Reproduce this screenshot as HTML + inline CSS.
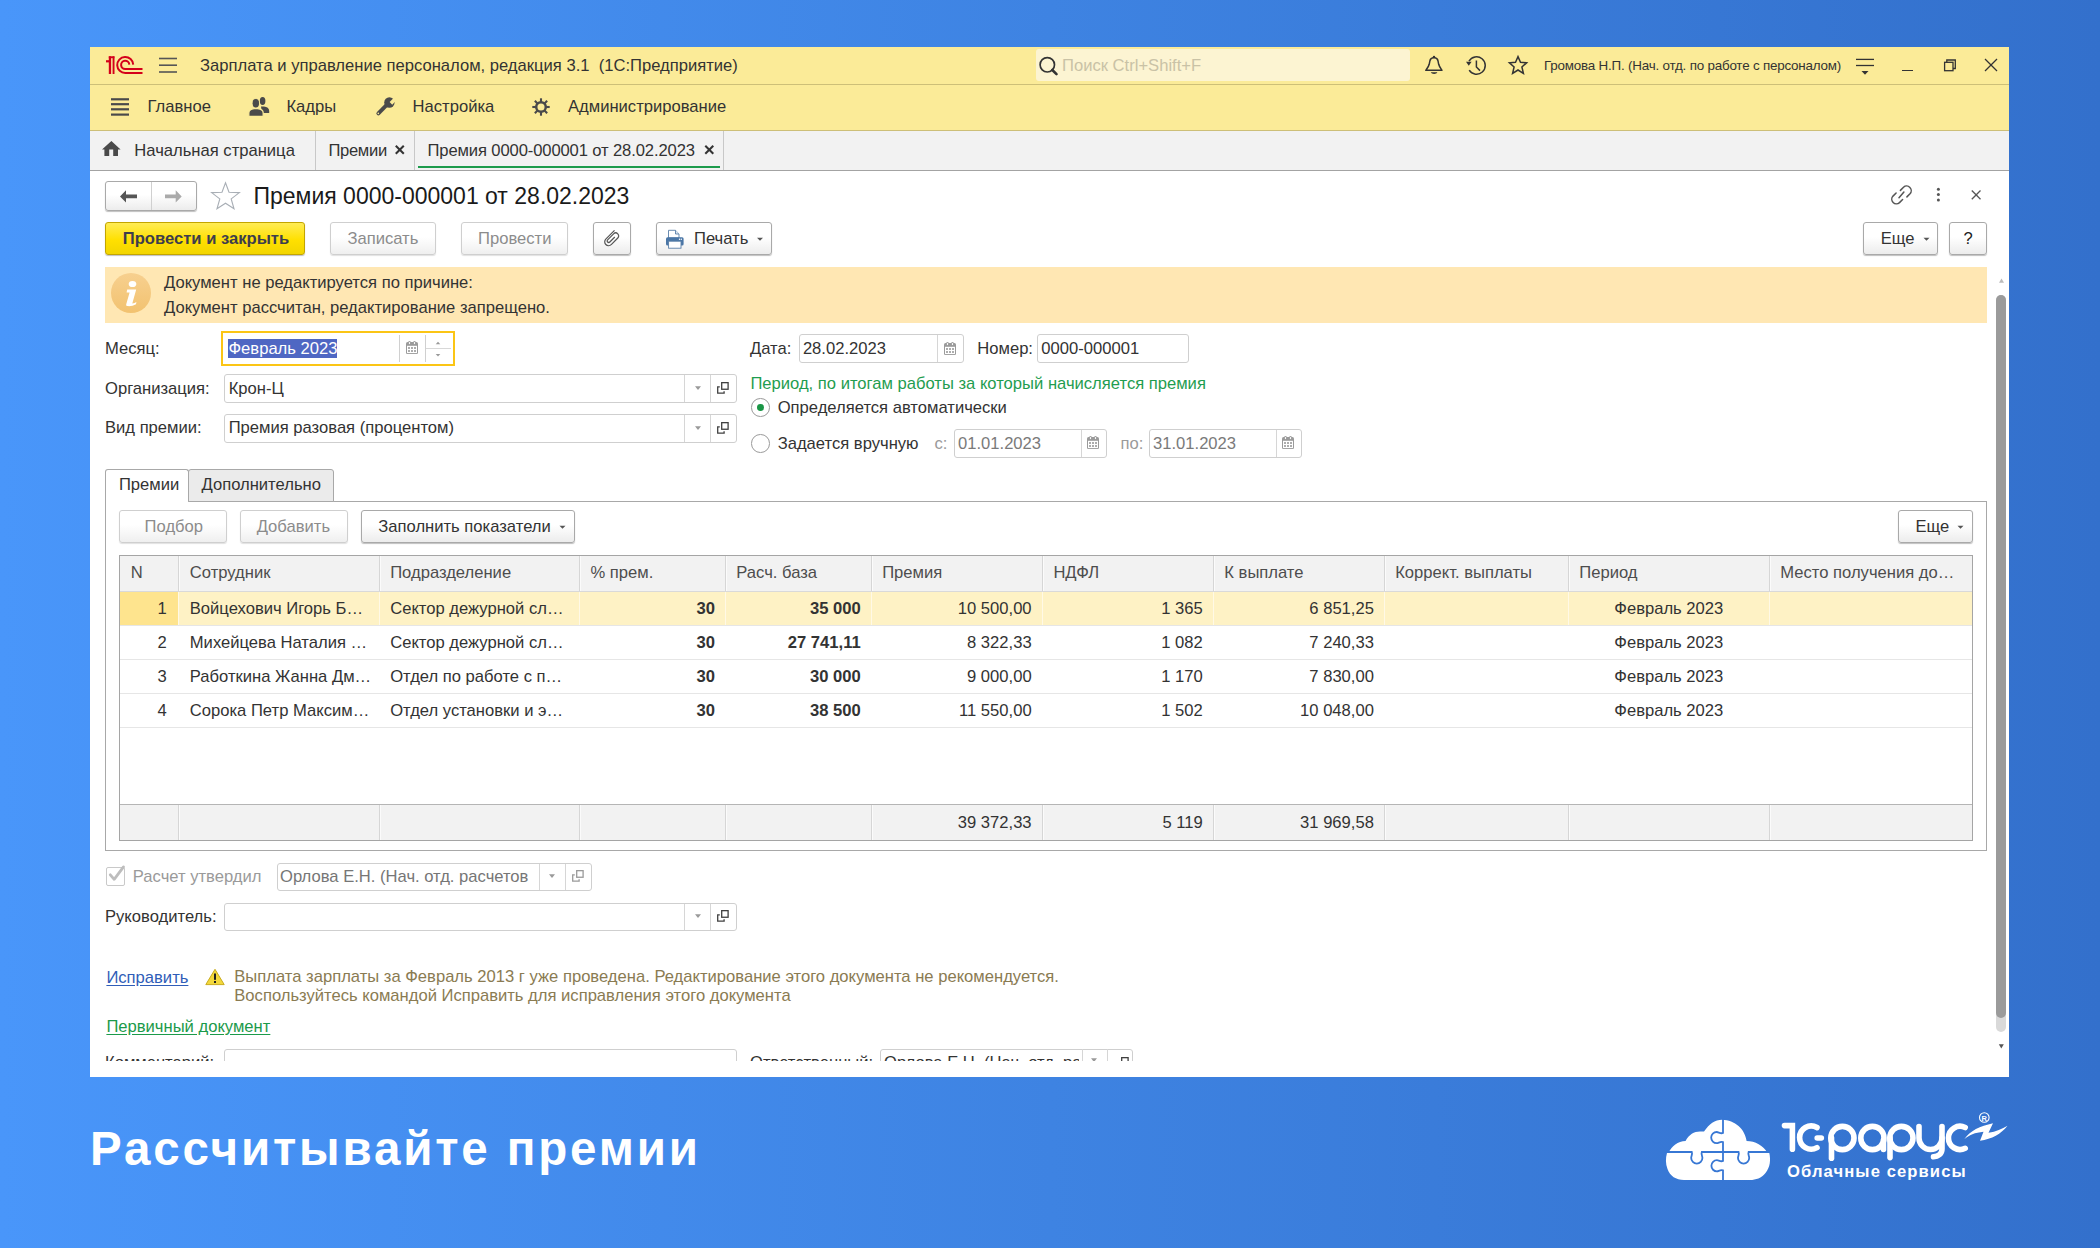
<!DOCTYPE html>
<html><head><meta charset="utf-8"><style>
html,body{margin:0;padding:0;}
body{width:2100px;height:1248px;overflow:hidden;position:relative;background:linear-gradient(90deg,#4996fa 0%,#3e83e2 50%,#3370cc 100%);font-family:"Liberation Sans",sans-serif;}
.t{position:absolute;white-space:pre;}
.b{position:absolute;box-sizing:border-box;}
.btn{position:absolute;box-sizing:border-box;border:1px solid #a9a9a9;border-radius:3px;background:linear-gradient(#ffffff 0%,#ffffff 45%,#ececec 100%);box-shadow:0 1px 1px rgba(0,0,0,0.25);}
.btnd{position:absolute;box-sizing:border-box;border:1px solid #cfcfcf;border-radius:3px;background:linear-gradient(#ffffff 0%,#ffffff 45%,#efefef 100%);box-shadow:0 1px 1px rgba(0,0,0,0.12);}
.fld{position:absolute;box-sizing:border-box;border:1px solid #cfcfcf;border-radius:3px;background:#fff;}
.clip{position:absolute;overflow:hidden;}
</style></head><body>

<div class="b" style="left:90px;top:47px;width:1919px;height:1030px;background:#fff;"></div>
<div class="b" style="left:90px;top:47px;width:1919px;height:37px;background:#fbeb98;"></div>
<div class="b" style="left:90px;top:84px;width:1919px;height:1px;background:#cdbf78;"></div>
<div class="b" style="left:90px;top:85px;width:1919px;height:45px;background:#fbeb98;"></div>
<div class="b" style="left:90px;top:130px;width:1919px;height:1px;background:#cdbf78;"></div>
<div class="b" style="left:90px;top:131px;width:1919px;height:39px;background:#f2f2f2;"></div>
<div class="b" style="left:90px;top:170px;width:1919px;height:1px;background:#a3a3a3;"></div>
<svg class="b" style="left:100px;top:50px" width="50" height="30" viewBox="100 50 50 30">
<g fill="#d4001a">
<rect x="108.8" y="56.3" width="2.3" height="17.7"/>
<rect x="106" y="60.2" width="5" height="2.2"/>
<rect x="108.8" y="56.3" width="5.6" height="1.9"/>
<rect x="112.6" y="56.3" width="1.9" height="17.7"/>
</g>
<g fill="none" stroke="#d4001a" stroke-width="2">
<path d="M133.2 64.6 A 8 8 0 1 0 125.4 73 L 142.5 73"/>
<path d="M129.3 64.6 A 4.1 4.1 0 1 0 125.4 69 L 142.5 69"/>
</g></svg>
<svg class="b" style="left:150px;top:50px" width="40" height="30" viewBox="150 50 40 30"><g stroke="#555" stroke-width="1.6"><line x1="159" y1="58.5" x2="177" y2="58.5"/><line x1="159" y1="65.2" x2="177" y2="65.2"/><line x1="159" y1="72" x2="177" y2="72"/></g></svg>
<div class="t" style="left:200px;top:56.17px;font-size:16.6px;line-height:20.75px;color:#333;font-weight:normal;">Зарплата и управление персоналом, редакция 3.1  (1С:Предприятие)</div>
<div class="b" style="left:1036px;top:49px;width:374px;height:32px;background:#fcf4d2;border-radius:3px;"></div>
<svg class="b" style="left:1030px;top:50px" width="40" height="30" viewBox="1030 50 40 30"><circle cx="1047.3" cy="64.8" r="7.2" fill="none" stroke="#333" stroke-width="1.7"/><line x1="1052.3" y1="70" x2="1056.5" y2="74.2" stroke="#333" stroke-width="2.6" stroke-linecap="round"/></svg>
<div class="t" style="left:1062px;top:55.67px;font-size:16.6px;line-height:20.75px;color:#c9c2a6;font-weight:normal;">Поиск Ctrl+Shift+F</div>
<svg class="b" style="left:1420px;top:50px" width="30" height="30" viewBox="1420 50 30 30"><g fill="none" stroke="#333" stroke-width="1.5" stroke-linejoin="round">
<path d="M1425.8 70.3 L1442 70.3 C1441 68.8 1439.3 66.8 1438.7 64.3 L1438 60.8 C1437.6 58.8 1436 57.8 1434 57.6 C1432 57.8 1430.3 58.8 1429.9 60.8 L1429.2 64.3 C1428.6 66.8 1426.8 68.8 1425.8 70.3 Z"/></g>
<circle cx="1434" cy="57" r="1.2" fill="#333"/>
<path d="M1430.8 72.3 L1437.4 72.3 C1436.5 74.6 1431.7 74.6 1430.8 72.3 Z" fill="#333"/></svg>
<svg class="b" style="left:1460px;top:50px" width="30" height="30" viewBox="1460 50 30 30"><g fill="none" stroke="#333" stroke-width="1.5">
<path d="M1469 61.2 A 8.7 8.7 0 1 1 1469.2 70.2"/>
<path d="M1476.4 60.5 L1476.4 67 L1480 70.6"/></g>
<path d="M1466 61.8 L1471.6 61.8 L1468.8 65.8 Z" fill="#333"/></svg>
<svg class="b" style="left:1500px;top:50px" width="35" height="30" viewBox="1500 50 35 30"><path d="M1518 56.6 L1520.5 62.3 L1526.6 62.8 L1521.9 67 L1523.4 73.4 L1518 70 L1512.6 73.4 L1514.1 67 L1509.4 62.8 L1515.5 62.3 Z" fill="none" stroke="#333" stroke-width="1.5" stroke-linejoin="miter"/></svg>
<div class="t" style="left:1544px;top:57.78px;font-size:13.4px;line-height:16.75px;color:#333;font-weight:normal;letter-spacing:-0.2px;">Громова Н.П. (Нач. отд. по работе с персоналом)</div>
<svg class="b" style="left:1850px;top:50px" width="30" height="30" viewBox="1850 50 30 30"><g stroke="#333" stroke-width="1.3"><line x1="1856" y1="59.4" x2="1874" y2="59.4"/><line x1="1856" y1="65.5" x2="1874" y2="65.5"/></g><path d="M1861.5 71 L1868.5 71 L1865 74.8 Z" fill="#333"/></svg>
<div class="b" style="left:1902px;top:70px;width:11px;height:1.4px;background:#333;"></div>
<svg class="b" style="left:1940px;top:55px" width="20" height="20" viewBox="1940 55 20 20"><g fill="none" stroke="#333" stroke-width="1.3"><rect x="1944.6" y="62.3" width="8.4" height="8.4"/><path d="M1946.8 62.3 L1946.8 60 L1955.3 60 L1955.3 68.5 L1953 68.5"/></g></svg>
<svg class="b" style="left:1980px;top:55px" width="22" height="20" viewBox="1980 55 22 20"><g stroke="#333" stroke-width="1.3"><line x1="1985" y1="59" x2="1997" y2="71"/><line x1="1997" y1="59" x2="1985" y2="71"/></g></svg>
<svg class="b" style="left:105px;top:92px" width="30" height="30" viewBox="105 92 30 30"><g stroke="#4a4a4a" stroke-width="2.2"><line x1="111" y1="99.3" x2="129" y2="99.3"/><line x1="111" y1="104.2" x2="129" y2="104.2"/><line x1="111" y1="109.3" x2="129" y2="109.3"/><line x1="111" y1="114.6" x2="129" y2="114.6"/></g></svg>
<div class="t" style="left:147.5px;top:96.87px;font-size:16.6px;line-height:20.75px;color:#333;font-weight:normal;">Главное</div>
<svg class="b" style="left:245px;top:92px" width="30" height="30" viewBox="245 92 30 30"><g fill="#4a4a4a">
<ellipse cx="262.6" cy="101" rx="2.8" ry="4"/>
<path d="M261 106.6 L264 106.6 C267 106.8 269.2 108.5 269.2 111 L269.2 113 L262 113 Z"/>
</g>
<g fill="#4a4a4a" stroke="#fbeb98" stroke-width="1.3">
<ellipse cx="255.8" cy="103.3" rx="3.5" ry="4.5"/>
<path d="M248.8 116.3 L248.8 113 C248.8 110.5 251.2 108.9 254 108.6 L257.6 108.6 C260.6 108.9 263.2 110.5 263.2 113 L263.2 116.3 Z"/>
</g>
<ellipse cx="255.8" cy="103.3" rx="3.2" ry="4.2" fill="#4a4a4a"/></svg>
<div class="t" style="left:286.4px;top:96.87px;font-size:16.6px;line-height:20.75px;color:#333;font-weight:normal;">Кадры</div>
<svg class="b" style="left:370px;top:92px" width="30" height="30" viewBox="370 92 30 30"><g fill="#4a4a4a"><line x1="378.4" y1="113.3" x2="387" y2="104.7" stroke="#4a4a4a" stroke-width="4" stroke-linecap="round"/>
<circle cx="389.4" cy="102.5" r="5.2"/></g>
<path d="M389.6 102.1 L394.6 96.9 L397.3 99.6 L392.2 104.7 Z" fill="#fbeb98"/>
<circle cx="378.3" cy="113.4" r="0.8" fill="#fbeb98"/></svg>
<div class="t" style="left:412.6px;top:96.87px;font-size:16.6px;line-height:20.75px;color:#333;font-weight:normal;">Настройка</div>
<svg class="b" style="left:525px;top:92px" width="30" height="30" viewBox="525 92 30 30"><circle cx="541" cy="107" r="4.8" fill="none" stroke="#4a4a4a" stroke-width="2.5"/><g stroke="#4a4a4a" stroke-width="2.1"><line x1="546.00" y1="107.00" x2="549.70" y2="107.00"/><line x1="544.54" y1="110.54" x2="547.15" y2="113.15"/><line x1="541.00" y1="112.00" x2="541.00" y2="115.70"/><line x1="537.46" y1="110.54" x2="534.85" y2="113.15"/><line x1="536.00" y1="107.00" x2="532.30" y2="107.00"/><line x1="537.46" y1="103.46" x2="534.85" y2="100.85"/><line x1="541.00" y1="102.00" x2="541.00" y2="98.30"/><line x1="544.54" y1="103.46" x2="547.15" y2="100.85"/></g></svg>
<div class="t" style="left:568px;top:96.87px;font-size:16.6px;line-height:20.75px;color:#333;font-weight:normal;">Администрирование</div>
<svg class="b" style="left:98px;top:135px" width="28" height="28" viewBox="98 135 28 28"><path d="M111.4 141 L102 149.6 L104.4 149.6 L104.4 156 L109.2 156 L109.2 149.6 L113.2 149.6 L113.2 156 L118 156 L118 149.6 L120.6 149.6 Z" fill="#4a4a4a"/></svg>
<div class="t" style="left:134.3px;top:140.57px;font-size:16.6px;line-height:20.75px;color:#333;font-weight:normal;">Начальная страница</div>
<div class="b" style="left:315px;top:131px;width:1px;height:39px;background:#c8c8c8;"></div>
<div class="t" style="left:328.4px;top:140.57px;font-size:16.6px;line-height:20.75px;color:#333;font-weight:normal;letter-spacing:-0.3px;">Премии</div>
<svg class="b" style="left:390px;top:140px" width="20" height="20" viewBox="390 140 20 20"><g stroke="#333" stroke-width="2"><line x1="395.8" y1="145.8" x2="403.8" y2="153.8"/><line x1="403.8" y1="145.8" x2="395.8" y2="153.8"/></g></svg>
<div class="b" style="left:414px;top:131px;width:1px;height:39px;background:#c8c8c8;"></div>
<div class="t" style="left:427.5px;top:140.57px;font-size:16.6px;line-height:20.75px;color:#333;font-weight:normal;letter-spacing:-0.12px;">Премия 0000-000001 от 28.02.2023</div>
<svg class="b" style="left:700px;top:140px" width="20" height="20" viewBox="700 140 20 20"><g stroke="#333" stroke-width="2"><line x1="705.3" y1="145.8" x2="713.3" y2="153.8"/><line x1="713.3" y1="145.8" x2="705.3" y2="153.8"/></g></svg>
<div class="b" style="left:418px;top:166px;width:302px;height:2px;background:#1d9b4c;"></div>
<div class="b" style="left:723px;top:131px;width:1px;height:39px;background:#c8c8c8;"></div>
<div class="btn" style="left:105px;top:181px;width:92px;height:30px;"></div>
<div class="b" style="left:151px;top:182px;width:1px;height:28px;background:#d0d0d0;"></div>
<svg class="b" style="left:115px;top:185px" width="70" height="24" viewBox="115 185 70 24"><path d="M120 196.4 L126 190.3 L126 194.6 L137 194.6 L137 198.2 L126 198.2 L126 202.5 Z" fill="#555"/><path d="M181.7 196.4 L175.7 190.3 L175.7 194.6 L165 194.6 L165 198.2 L175.7 198.2 L175.7 202.5 Z" fill="#aaa"/></svg>
<svg class="b" style="left:208px;top:180px" width="36" height="32" viewBox="208 180 36 32"><path d="M225.5 182.8 L229 192.2 L239.4 192.6 L231.2 198.9 L234 208.8 L225.5 203.2 L217 208.8 L219.8 198.9 L211.6 192.6 L222 192.2 Z" fill="none" stroke="#a8aeb5" stroke-width="1.1" stroke-linejoin="miter"/></svg>
<div class="t" style="left:253.5px;top:182.46px;font-size:23px;line-height:28.75px;color:#1a1a1a;font-weight:normal;">Премия 0000-000001 от 28.02.2023</div>
<svg class="b" style="left:1885px;top:180px" width="32" height="30" viewBox="1885 180 32 30"><g fill="none" stroke="#555" stroke-width="1.5" stroke-linecap="round">
<path d="M1900.4 190.4 L1903.5 187.3 A4.6 4.6 0 0 1 1910 193.8 L1906.9 196.9"/>
<path d="M1902.6 199.5 L1899.5 202.6 A4.6 4.6 0 0 1 1893 196.1 L1896.1 193"/>
<line x1="1899" y1="197.8" x2="1903.9" y2="192"/>
</g></svg>
<svg class="b" style="left:1930px;top:180px" width="18" height="30" viewBox="1930 180 18 30"><g fill="#555"><circle cx="1938.4" cy="189.2" r="1.5"/><circle cx="1938.4" cy="194.6" r="1.5"/><circle cx="1938.4" cy="199.9" r="1.5"/></g></svg>
<svg class="b" style="left:1965px;top:185px" width="22" height="20" viewBox="1965 185 22 20"><g stroke="#555" stroke-width="1.3"><line x1="1971.8" y1="190.5" x2="1980.5" y2="199.2"/><line x1="1980.5" y1="190.5" x2="1971.8" y2="199.2"/></g></svg>
<div class="b" style="left:105px;top:222px;width:200px;height:33px;border:1px solid #c3a500;border-radius:3px;background:linear-gradient(#ffec55 0%,#ffe000 55%,#f2d500 100%);box-shadow:0 1px 1px rgba(0,0,0,0.25);"></div>
<div class="t" style="left:122.8px;top:228.87px;font-size:16.6px;line-height:20.75px;color:#3d3d4d;font-weight:bold;">Провести и закрыть</div>
<div class="btnd" style="left:330px;top:222px;width:106px;height:33px;"></div>
<div class="t" style="left:347.4px;top:228.87px;font-size:16.6px;line-height:20.75px;color:#8c8c8c;font-weight:normal;">Записать</div>
<div class="btnd" style="left:461px;top:222px;width:107px;height:33px;"></div>
<div class="t" style="left:478px;top:228.87px;font-size:16.6px;line-height:20.75px;color:#8c8c8c;font-weight:normal;">Провести</div>
<div class="btn" style="left:593px;top:222px;width:38px;height:33px;"></div>
<svg class="b" style="left:600px;top:226px" width="24" height="24" viewBox="600 226 24 24"><path d="M614.5 230.3 L606 238.8 C604.3 240.5 604.3 243 605.8 244.5 C607.3 246 609.8 246 611.5 244.3 L617.8 238 C619 236.8 619 235 617.8 233.8 C616.6 232.6 614.8 232.6 613.6 233.8 L607.6 239.8 C607 240.4 607 241.4 607.6 242 C608.2 242.6 609.2 242.6 609.8 242 L614.8 237" fill="none" stroke="#555" stroke-width="1.2"/></svg>
<div class="btn" style="left:656px;top:222px;width:116px;height:33px;"></div>
<svg class="b" style="left:662px;top:226px" width="26" height="26" viewBox="662 226 26 26"><path d="M668.5 230.3 L675.5 230.3 L679 234 L679 238 L668.5 238 Z" fill="#fff" stroke="#5a7fa8" stroke-width="0.9"/>
<path d="M675.5 230.3 L675.5 234 L679 234" fill="#dce6f0" stroke="#5a7fa8" stroke-width="0.9"/>
<rect x="666" y="237.2" width="17.6" height="8.2" rx="1.5" fill="#4a76a6"/>
<rect x="668.6" y="241.2" width="12.4" height="7" fill="#fff" stroke="#5a7fa8" stroke-width="0.9"/>
<circle cx="679.5" cy="239.3" r="0.7" fill="#fff"/><circle cx="681.3" cy="239.3" r="0.7" fill="#fff"/></svg>
<div class="t" style="left:694px;top:228.87px;font-size:16.6px;line-height:20.75px;color:#333;font-weight:normal;">Печать</div>
<svg class="b" style="left:754px;top:234px" width="12" height="10" viewBox="754 234 12 10"><path d="M757 237.8 L763 237.8 L760 240.8 Z" fill="#555"/></svg>
<div class="btn" style="left:1863px;top:222px;width:75px;height:33px;"></div>
<div class="t" style="left:1880.8px;top:228.67px;font-size:16.6px;line-height:20.75px;color:#333;font-weight:normal;">Еще</div>
<svg class="b" style="left:1921px;top:234px" width="12" height="10" viewBox="1921 234 12 10"><path d="M1923.5 237.8 L1929.5 237.8 L1926.5 240.8 Z" fill="#555"/></svg>
<div class="btn" style="left:1949px;top:222px;width:38px;height:33px;"></div>
<div class="t" style="left:1963.5px;top:228.67px;font-size:16.6px;line-height:20.75px;color:#222;font-weight:normal;">?</div>
<div class="b" style="left:105px;top:267px;width:1882px;height:56px;background:#ffe7b3;"></div>
<div class="b" style="left:111px;top:273px;width:40px;height:40px;border-radius:50%;background:linear-gradient(#f7d08f,#f2c270);"></div>
<svg class="b" style="left:111px;top:273px" width="40" height="40" viewBox="0 0 40 40"><ellipse cx="21.5" cy="11" rx="3.8" ry="3.1" fill="#fff"/><path d="M16.2 16.5 L25.2 16.5 L21.3 30.4 C22.8 30.4 24.2 29.9 25.4 29.1 L25 31.3 C22.4 32.8 19.6 33.3 16.6 33.1 C15.4 33 14.9 32.3 15.3 31 L18.6 19.6 L15.6 19.4 Z" fill="#fff"/></svg>
<div class="t" style="left:164px;top:273.07px;font-size:16.6px;line-height:20.75px;color:#333;font-weight:normal;">Документ не редактируется по причине:</div>
<div class="t" style="left:164px;top:297.87px;font-size:16.6px;line-height:20.75px;color:#333;font-weight:normal;">Документ рассчитан, редактирование запрещено.</div>
<svg class="b" style="left:1995px;top:275px" width="12" height="12" viewBox="1995 275 12 12"><path d="M1999 282.8 L2004 282.8 L2001.5 278.6 Z" fill="#bbb"/></svg>
<div class="b" style="left:1996px;top:295px;width:10px;height:737px;background:#d9d9d9;border-radius:5px;"></div>
<div class="b" style="left:1996px;top:295px;width:10px;height:723px;background:#9b9b9b;border-radius:5px;"></div>
<svg class="b" style="left:1995px;top:1040px" width="12" height="12" viewBox="1995 1040 12 12"><path d="M1998.8 1044.3 L2003.8 1044.3 L2001.3 1048.6 Z" fill="#555"/></svg>
<div class="t" style="left:105px;top:339.17px;font-size:16.6px;line-height:20.75px;color:#333;font-weight:normal;">Месяц:</div>
<div class="b" style="left:221px;top:331px;width:234px;height:35px;border:2.6px solid #fbc515;background:#fff;"></div>
<div class="b" style="left:228px;top:339px;width:109px;height:19px;background:#4f67c3;"></div>
<div class="t" style="left:228.5px;top:339.07px;font-size:16.6px;line-height:20.75px;color:#fff;font-weight:normal;">Февраль 2023</div>
<div class="b" style="left:399px;top:335px;width:1px;height:27px;background:#d0d0d0;"></div>
<div class="b" style="left:425px;top:335px;width:1px;height:27px;background:#d0d0d0;"></div>
<svg class="b" style="left:406px;top:341px" width="12" height="13" viewBox="0 0 12 13"><rect x="0" y="1" width="12" height="12.2" rx="1.6" fill="#9a9a9a"/>
<rect x="1" y="4.8" width="10" height="7.3" fill="#fff"/>
<g fill="#9a9a9a"><rect x="2.1" y="6.1" width="1.8" height="1.8"/><rect x="5.1" y="6.1" width="1.8" height="1.8"/><rect x="8.1" y="6.1" width="1.8" height="1.8"/>
<rect x="2.1" y="9.1" width="1.8" height="1.8"/><rect x="5.1" y="9.1" width="1.8" height="1.8"/><rect x="8.1" y="9.1" width="1.8" height="1.8"/></g>
<circle cx="3.5" cy="1.5" r="1.5" fill="#9a9a9a"/><circle cx="8.5" cy="1.5" r="1.5" fill="#9a9a9a"/>
<ellipse cx="3.5" cy="2.1" rx="0.7" ry="1.1" fill="#fff"/><ellipse cx="8.5" cy="2.1" rx="0.7" ry="1.1" fill="#fff"/></svg>
<div class="b" style="left:426px;top:348px;width:25px;height:1px;background:#d8d8d8;"></div>
<svg class="b" style="left:433px;top:339px" width="10" height="20" viewBox="0 0 10 20"><path d="M2.7 5.2 L7.3 5.2 L5 2.7 Z" fill="#999"/><path d="M2.7 15 L7.3 15 L5 17.5 Z" fill="#999"/></svg>
<div class="t" style="left:105px;top:378.67px;font-size:16.6px;line-height:20.75px;color:#333;font-weight:normal;">Организация:</div>
<div class="fld" style="left:224px;top:374px;width:513px;height:29px;"></div>
<div class="b" style="left:684px;top:375px;width:1px;height:27px;background:#d6d6d6;"></div>
<div class="b" style="left:710px;top:375px;width:1px;height:27px;background:#d6d6d6;"></div>
<svg class="b" style="left:693px;top:384px" width="10" height="8" viewBox="0 0 10 8"><path d="M2 2.3 L8 2.3 L5 6 Z" fill="#9a9a9a"/></svg>
<svg class="b" style="left:717px;top:382px" width="13" height="13" viewBox="0 0 13 13"><g fill="none" stroke="#404040" stroke-width="1.3"><rect x="4.7" y="0.65" width="6.4" height="6.6"/><path d="M2.8 4.8 L0.7 4.8 L0.7 11.2 L7.1 11.2 L7.1 9.2"/></g></svg>
<div class="t" style="left:228.7px;top:378.67px;font-size:16.6px;line-height:20.75px;color:#333;font-weight:normal;">Крон-Ц</div>
<div class="t" style="left:105px;top:418.37px;font-size:16.6px;line-height:20.75px;color:#333;font-weight:normal;">Вид премии:</div>
<div class="fld" style="left:224px;top:414px;width:513px;height:29px;"></div>
<div class="b" style="left:684px;top:415px;width:1px;height:27px;background:#d6d6d6;"></div>
<div class="b" style="left:710px;top:415px;width:1px;height:27px;background:#d6d6d6;"></div>
<svg class="b" style="left:693px;top:424px" width="10" height="8" viewBox="0 0 10 8"><path d="M2 2.3 L8 2.3 L5 6 Z" fill="#9a9a9a"/></svg>
<svg class="b" style="left:717px;top:422px" width="13" height="13" viewBox="0 0 13 13"><g fill="none" stroke="#404040" stroke-width="1.3"><rect x="4.7" y="0.65" width="6.4" height="6.6"/><path d="M2.8 4.8 L0.7 4.8 L0.7 11.2 L7.1 11.2 L7.1 9.2"/></g></svg>
<div class="t" style="left:228.7px;top:418.37px;font-size:16.6px;line-height:20.75px;color:#333;font-weight:normal;">Премия разовая (процентом)</div>
<div class="t" style="left:750px;top:338.67px;font-size:16.6px;line-height:20.75px;color:#333;font-weight:normal;">Дата:</div>
<div class="fld" style="left:799px;top:334px;width:165px;height:29px;"></div>
<div class="b" style="left:937px;top:335px;width:1px;height:27px;background:#d6d6d6;"></div>
<svg class="b" style="left:944px;top:342px" width="12" height="13" viewBox="0 0 12 13"><rect x="0" y="1" width="12" height="12.2" rx="1.6" fill="#9a9a9a"/>
<rect x="1" y="4.8" width="10" height="7.3" fill="#fff"/>
<g fill="#9a9a9a"><rect x="2.1" y="6.1" width="1.8" height="1.8"/><rect x="5.1" y="6.1" width="1.8" height="1.8"/><rect x="8.1" y="6.1" width="1.8" height="1.8"/>
<rect x="2.1" y="9.1" width="1.8" height="1.8"/><rect x="5.1" y="9.1" width="1.8" height="1.8"/><rect x="8.1" y="9.1" width="1.8" height="1.8"/></g>
<circle cx="3.5" cy="1.5" r="1.5" fill="#9a9a9a"/><circle cx="8.5" cy="1.5" r="1.5" fill="#9a9a9a"/>
<ellipse cx="3.5" cy="2.1" rx="0.7" ry="1.1" fill="#fff"/><ellipse cx="8.5" cy="2.1" rx="0.7" ry="1.1" fill="#fff"/></svg>
<div class="t" style="left:802.9px;top:339.07px;font-size:16.6px;line-height:20.75px;color:#333;font-weight:normal;">28.02.2023</div>
<div class="t" style="left:977.3px;top:338.87px;font-size:16.6px;line-height:20.75px;color:#333;font-weight:normal;">Номер:</div>
<div class="fld" style="left:1037px;top:334px;width:152px;height:29px;"></div>
<div class="t" style="left:1041.3px;top:339.07px;font-size:16.6px;line-height:20.75px;color:#333;font-weight:normal;">0000-000001</div>
<div class="t" style="left:750.4px;top:374.37px;font-size:16.6px;line-height:20.75px;color:#1f9d50;font-weight:normal;">Период, по итогам работы за который начисляется премия</div>
<div class="b" style="left:751px;top:398.3px;width:18.6px;height:18.6px;border:1px solid #9a9a9a;border-radius:50%;background:#fff;"></div>
<div class="b" style="left:757.1px;top:404.4px;width:6.8px;height:6.8px;border-radius:50%;background:#1a9646;"></div>
<div class="t" style="left:777.7px;top:397.77px;font-size:16.6px;line-height:20.75px;color:#333;font-weight:normal;">Определяется автоматически</div>
<div class="b" style="left:751px;top:434px;width:18.6px;height:18.6px;border:1px solid #9a9a9a;border-radius:50%;background:#fff;"></div>
<div class="t" style="left:777.7px;top:433.87px;font-size:16.6px;line-height:20.75px;color:#333;font-weight:normal;">Задается вручную</div>
<div class="t" style="left:934.5px;top:433.87px;font-size:16.6px;line-height:20.75px;color:#9a9a9a;font-weight:normal;">с:</div>
<div class="fld" style="left:954px;top:429px;width:153px;height:29px;"></div>
<div class="b" style="left:1080.5px;top:430px;width:1px;height:27px;background:#d6d6d6;"></div>
<svg class="b" style="left:1087px;top:436px" width="12" height="13" viewBox="0 0 12 13"><rect x="0" y="1" width="12" height="12.2" rx="1.6" fill="#9a9a9a"/>
<rect x="1" y="4.8" width="10" height="7.3" fill="#fff"/>
<g fill="#9a9a9a"><rect x="2.1" y="6.1" width="1.8" height="1.8"/><rect x="5.1" y="6.1" width="1.8" height="1.8"/><rect x="8.1" y="6.1" width="1.8" height="1.8"/>
<rect x="2.1" y="9.1" width="1.8" height="1.8"/><rect x="5.1" y="9.1" width="1.8" height="1.8"/><rect x="8.1" y="9.1" width="1.8" height="1.8"/></g>
<circle cx="3.5" cy="1.5" r="1.5" fill="#9a9a9a"/><circle cx="8.5" cy="1.5" r="1.5" fill="#9a9a9a"/>
<ellipse cx="3.5" cy="2.1" rx="0.7" ry="1.1" fill="#fff"/><ellipse cx="8.5" cy="2.1" rx="0.7" ry="1.1" fill="#fff"/></svg>
<div class="t" style="left:958px;top:433.67px;font-size:16.6px;line-height:20.75px;color:#7a7a7a;font-weight:normal;">01.01.2023</div>
<div class="t" style="left:1120.6px;top:433.87px;font-size:16.6px;line-height:20.75px;color:#9a9a9a;font-weight:normal;">по:</div>
<div class="fld" style="left:1149px;top:429px;width:153px;height:29px;"></div>
<div class="b" style="left:1275.5px;top:430px;width:1px;height:27px;background:#d6d6d6;"></div>
<svg class="b" style="left:1282px;top:436px" width="12" height="13" viewBox="0 0 12 13"><rect x="0" y="1" width="12" height="12.2" rx="1.6" fill="#9a9a9a"/>
<rect x="1" y="4.8" width="10" height="7.3" fill="#fff"/>
<g fill="#9a9a9a"><rect x="2.1" y="6.1" width="1.8" height="1.8"/><rect x="5.1" y="6.1" width="1.8" height="1.8"/><rect x="8.1" y="6.1" width="1.8" height="1.8"/>
<rect x="2.1" y="9.1" width="1.8" height="1.8"/><rect x="5.1" y="9.1" width="1.8" height="1.8"/><rect x="8.1" y="9.1" width="1.8" height="1.8"/></g>
<circle cx="3.5" cy="1.5" r="1.5" fill="#9a9a9a"/><circle cx="8.5" cy="1.5" r="1.5" fill="#9a9a9a"/>
<ellipse cx="3.5" cy="2.1" rx="0.7" ry="1.1" fill="#fff"/><ellipse cx="8.5" cy="2.1" rx="0.7" ry="1.1" fill="#fff"/></svg>
<div class="t" style="left:1153px;top:433.67px;font-size:16.6px;line-height:20.75px;color:#7a7a7a;font-weight:normal;">31.01.2023</div>
<div class="b" style="left:105px;top:501px;width:1882px;height:350px;border:1px solid #a8a8a8;border-top:none;"></div>
<div class="b" style="left:188px;top:501px;width:1799px;height:1px;background:#a8a8a8;"></div>
<div class="b" style="left:105px;top:469px;width:84px;height:33px;border:1px solid #a8a8a8;border-bottom:none;border-radius:3px 3px 0 0;background:#fff;"></div>
<div class="b" style="left:188px;top:469px;width:146px;height:33px;border:1px solid #a8a8a8;border-radius:3px 3px 0 0;background:#ebebeb;"></div>
<div class="t" style="left:118.9px;top:475.17px;font-size:16.6px;line-height:20.75px;color:#333;font-weight:normal;">Премии</div>
<div class="t" style="left:201.5px;top:475.17px;font-size:16.6px;line-height:20.75px;color:#333;font-weight:normal;">Дополнительно</div>
<div class="btnd" style="left:119px;top:510px;width:108px;height:33px;"></div>
<div class="t" style="left:144.6px;top:516.87px;font-size:16.6px;line-height:20.75px;color:#8c8c8c;font-weight:normal;">Подбор</div>
<div class="btnd" style="left:240px;top:510px;width:108px;height:33px;"></div>
<div class="t" style="left:256.7px;top:516.87px;font-size:16.6px;line-height:20.75px;color:#8c8c8c;font-weight:normal;">Добавить</div>
<div class="btn" style="left:361px;top:510px;width:214px;height:33px;"></div>
<div class="t" style="left:378.3px;top:516.87px;font-size:16.6px;line-height:20.75px;color:#333;font-weight:normal;">Заполнить показатели</div>
<svg class="b" style="left:557px;top:522px" width="12" height="10" viewBox="557 522 12 10"><path d="M559.5 525.8 L565.5 525.8 L562.5 528.8 Z" fill="#555"/></svg>
<div class="btn" style="left:1898px;top:510px;width:75px;height:33px;"></div>
<div class="t" style="left:1915.5px;top:516.87px;font-size:16.6px;line-height:20.75px;color:#333;font-weight:normal;">Еще</div>
<svg class="b" style="left:1955px;top:522px" width="12" height="10" viewBox="1955 522 12 10"><path d="M1957.5 525.8 L1963.5 525.8 L1960.5 528.8 Z" fill="#555"/></svg>
<div class="b" style="left:119px;top:555px;width:1854px;height:286px;border:1px solid #a5a5a5;background:#fff;"></div>
<div class="b" style="left:120px;top:556px;width:1852px;height:35px;background:#f2f2f2;"></div>
<div class="b" style="left:120px;top:591px;width:1852px;height:1px;background:#d9d9d9;"></div>
<div class="b" style="left:178px;top:556px;width:1px;height:35px;background:#d6d6d6;"></div>
<div class="b" style="left:179px;top:556px;width:1px;height:35px;background:#fbfbfb;"></div>
<div class="b" style="left:379px;top:556px;width:1px;height:35px;background:#d6d6d6;"></div>
<div class="b" style="left:380px;top:556px;width:1px;height:35px;background:#fbfbfb;"></div>
<div class="b" style="left:579px;top:556px;width:1px;height:35px;background:#d6d6d6;"></div>
<div class="b" style="left:580px;top:556px;width:1px;height:35px;background:#fbfbfb;"></div>
<div class="b" style="left:725px;top:556px;width:1px;height:35px;background:#d6d6d6;"></div>
<div class="b" style="left:726px;top:556px;width:1px;height:35px;background:#fbfbfb;"></div>
<div class="b" style="left:871px;top:556px;width:1px;height:35px;background:#d6d6d6;"></div>
<div class="b" style="left:872px;top:556px;width:1px;height:35px;background:#fbfbfb;"></div>
<div class="b" style="left:1042px;top:556px;width:1px;height:35px;background:#d6d6d6;"></div>
<div class="b" style="left:1043px;top:556px;width:1px;height:35px;background:#fbfbfb;"></div>
<div class="b" style="left:1213px;top:556px;width:1px;height:35px;background:#d6d6d6;"></div>
<div class="b" style="left:1214px;top:556px;width:1px;height:35px;background:#fbfbfb;"></div>
<div class="b" style="left:1384px;top:556px;width:1px;height:35px;background:#d6d6d6;"></div>
<div class="b" style="left:1385px;top:556px;width:1px;height:35px;background:#fbfbfb;"></div>
<div class="b" style="left:1568px;top:556px;width:1px;height:35px;background:#d6d6d6;"></div>
<div class="b" style="left:1569px;top:556px;width:1px;height:35px;background:#fbfbfb;"></div>
<div class="b" style="left:1769px;top:556px;width:1px;height:35px;background:#d6d6d6;"></div>
<div class="b" style="left:1770px;top:556px;width:1px;height:35px;background:#fbfbfb;"></div>
<div class="t" style="left:130.7px;top:562.87px;font-size:16.6px;line-height:20.75px;color:#4d4d4d;font-weight:normal;">N</div>
<div class="t" style="left:189.8px;top:562.87px;font-size:16.6px;line-height:20.75px;color:#4d4d4d;font-weight:normal;">Сотрудник</div>
<div class="t" style="left:390.2px;top:562.87px;font-size:16.6px;line-height:20.75px;color:#4d4d4d;font-weight:normal;">Подразделение</div>
<div class="t" style="left:590.5px;top:562.87px;font-size:16.6px;line-height:20.75px;color:#4d4d4d;font-weight:normal;">% прем.</div>
<div class="t" style="left:736.3px;top:562.87px;font-size:16.6px;line-height:20.75px;color:#4d4d4d;font-weight:normal;">Расч. база</div>
<div class="t" style="left:882.2px;top:562.87px;font-size:16.6px;line-height:20.75px;color:#4d4d4d;font-weight:normal;">Премия</div>
<div class="t" style="left:1053.4px;top:562.87px;font-size:16.6px;line-height:20.75px;color:#4d4d4d;font-weight:normal;">НДФЛ</div>
<div class="t" style="left:1224.3px;top:562.87px;font-size:16.6px;line-height:20.75px;color:#4d4d4d;font-weight:normal;">К выплате</div>
<div class="t" style="left:1395.2px;top:562.87px;font-size:16.6px;line-height:20.75px;color:#4d4d4d;font-weight:normal;">Коррект. выплаты</div>
<div class="t" style="left:1579.3px;top:562.87px;font-size:16.6px;line-height:20.75px;color:#4d4d4d;font-weight:normal;">Период</div>
<div class="t" style="left:1780.3px;top:562.87px;font-size:16.6px;line-height:20.75px;color:#4d4d4d;font-weight:normal;">Место получения до…</div>
<div class="b" style="left:120px;top:592px;width:1852px;height:33px;background:#fef2c5;"></div>
<div class="b" style="left:120px;top:592px;width:58px;height:33px;background:#fee48e;"></div>
<div class="b" style="left:178px;top:592px;width:1px;height:33px;background:#fff9e6;"></div>
<div class="b" style="left:379px;top:592px;width:1px;height:33px;background:#fff9e6;"></div>
<div class="b" style="left:579px;top:592px;width:1px;height:33px;background:#fff9e6;"></div>
<div class="b" style="left:725px;top:592px;width:1px;height:33px;background:#fff9e6;"></div>
<div class="b" style="left:871px;top:592px;width:1px;height:33px;background:#fff9e6;"></div>
<div class="b" style="left:1042px;top:592px;width:1px;height:33px;background:#fff9e6;"></div>
<div class="b" style="left:1213px;top:592px;width:1px;height:33px;background:#fff9e6;"></div>
<div class="b" style="left:1384px;top:592px;width:1px;height:33px;background:#fff9e6;"></div>
<div class="b" style="left:1568px;top:592px;width:1px;height:33px;background:#fff9e6;"></div>
<div class="b" style="left:1769px;top:592px;width:1px;height:33px;background:#fff9e6;"></div>
<div class="b" style="left:120px;top:625px;width:1852px;height:1px;background:#e6e6e6;"></div>
<div class="t" style="right:1933.4px;top:598.67px;font-size:16.6px;line-height:20.75px;color:#333;font-weight:normal;">1</div>
<div class="t" style="left:189.8px;top:598.67px;font-size:16.6px;line-height:20.75px;color:#333;font-weight:normal;">Войцехович Игорь Б…</div>
<div class="t" style="left:390.2px;top:598.67px;font-size:16.6px;line-height:20.75px;color:#333;font-weight:normal;">Сектор дежурной сл…</div>
<div class="t" style="right:1385px;top:598.67px;font-size:16.6px;line-height:20.75px;color:#333;font-weight:bold;">30</div>
<div class="t" style="right:1239.3px;top:598.67px;font-size:16.6px;line-height:20.75px;color:#333;font-weight:bold;">35 000</div>
<div class="t" style="right:1068.4px;top:598.67px;font-size:16.6px;line-height:20.75px;color:#333;font-weight:normal;">10 500,00</div>
<div class="t" style="right:897.3px;top:598.67px;font-size:16.6px;line-height:20.75px;color:#333;font-weight:normal;">1 365</div>
<div class="t" style="right:726.0999999999999px;top:598.67px;font-size:16.6px;line-height:20.75px;color:#333;font-weight:normal;">6 851,25</div>
<div class="t" style="left:1168.8px;width:1000px;text-align:center;top:598.67px;font-size:16.6px;line-height:20.75px;color:#333;font-weight:normal;">Февраль 2023</div>
<div class="b" style="left:120px;top:659px;width:1852px;height:1px;background:#e6e6e6;"></div>
<div class="t" style="right:1933.4px;top:632.67px;font-size:16.6px;line-height:20.75px;color:#333;font-weight:normal;">2</div>
<div class="t" style="left:189.8px;top:632.67px;font-size:16.6px;line-height:20.75px;color:#333;font-weight:normal;">Михейцева Наталия …</div>
<div class="t" style="left:390.2px;top:632.67px;font-size:16.6px;line-height:20.75px;color:#333;font-weight:normal;">Сектор дежурной сл…</div>
<div class="t" style="right:1385px;top:632.67px;font-size:16.6px;line-height:20.75px;color:#333;font-weight:bold;">30</div>
<div class="t" style="right:1239.3px;top:632.67px;font-size:16.6px;line-height:20.75px;color:#333;font-weight:bold;">27 741,11</div>
<div class="t" style="right:1068.4px;top:632.67px;font-size:16.6px;line-height:20.75px;color:#333;font-weight:normal;">8 322,33</div>
<div class="t" style="right:897.3px;top:632.67px;font-size:16.6px;line-height:20.75px;color:#333;font-weight:normal;">1 082</div>
<div class="t" style="right:726.0999999999999px;top:632.67px;font-size:16.6px;line-height:20.75px;color:#333;font-weight:normal;">7 240,33</div>
<div class="t" style="left:1168.8px;width:1000px;text-align:center;top:632.67px;font-size:16.6px;line-height:20.75px;color:#333;font-weight:normal;">Февраль 2023</div>
<div class="b" style="left:120px;top:693px;width:1852px;height:1px;background:#e6e6e6;"></div>
<div class="t" style="right:1933.4px;top:666.67px;font-size:16.6px;line-height:20.75px;color:#333;font-weight:normal;">3</div>
<div class="t" style="left:189.8px;top:666.67px;font-size:16.6px;line-height:20.75px;color:#333;font-weight:normal;">Работкина Жанна Дм…</div>
<div class="t" style="left:390.2px;top:666.67px;font-size:16.6px;line-height:20.75px;color:#333;font-weight:normal;">Отдел по работе с п…</div>
<div class="t" style="right:1385px;top:666.67px;font-size:16.6px;line-height:20.75px;color:#333;font-weight:bold;">30</div>
<div class="t" style="right:1239.3px;top:666.67px;font-size:16.6px;line-height:20.75px;color:#333;font-weight:bold;">30 000</div>
<div class="t" style="right:1068.4px;top:666.67px;font-size:16.6px;line-height:20.75px;color:#333;font-weight:normal;">9 000,00</div>
<div class="t" style="right:897.3px;top:666.67px;font-size:16.6px;line-height:20.75px;color:#333;font-weight:normal;">1 170</div>
<div class="t" style="right:726.0999999999999px;top:666.67px;font-size:16.6px;line-height:20.75px;color:#333;font-weight:normal;">7 830,00</div>
<div class="t" style="left:1168.8px;width:1000px;text-align:center;top:666.67px;font-size:16.6px;line-height:20.75px;color:#333;font-weight:normal;">Февраль 2023</div>
<div class="b" style="left:120px;top:727px;width:1852px;height:1px;background:#e6e6e6;"></div>
<div class="t" style="right:1933.4px;top:700.67px;font-size:16.6px;line-height:20.75px;color:#333;font-weight:normal;">4</div>
<div class="t" style="left:189.8px;top:700.67px;font-size:16.6px;line-height:20.75px;color:#333;font-weight:normal;">Сорока Петр Максим…</div>
<div class="t" style="left:390.2px;top:700.67px;font-size:16.6px;line-height:20.75px;color:#333;font-weight:normal;">Отдел установки и э…</div>
<div class="t" style="right:1385px;top:700.67px;font-size:16.6px;line-height:20.75px;color:#333;font-weight:bold;">30</div>
<div class="t" style="right:1239.3px;top:700.67px;font-size:16.6px;line-height:20.75px;color:#333;font-weight:bold;">38 500</div>
<div class="t" style="right:1068.4px;top:700.67px;font-size:16.6px;line-height:20.75px;color:#333;font-weight:normal;">11 550,00</div>
<div class="t" style="right:897.3px;top:700.67px;font-size:16.6px;line-height:20.75px;color:#333;font-weight:normal;">1 502</div>
<div class="t" style="right:726.0999999999999px;top:700.67px;font-size:16.6px;line-height:20.75px;color:#333;font-weight:normal;">10 048,00</div>
<div class="t" style="left:1168.8px;width:1000px;text-align:center;top:700.67px;font-size:16.6px;line-height:20.75px;color:#333;font-weight:normal;">Февраль 2023</div>
<div class="b" style="left:120px;top:804px;width:1852px;height:1px;background:#b5b5b5;"></div>
<div class="b" style="left:120px;top:805px;width:1852px;height:35px;background:#f2f2f2;"></div>
<div class="b" style="left:178px;top:805px;width:1px;height:35px;background:#d6d6d6;"></div>
<div class="b" style="left:179px;top:805px;width:1px;height:35px;background:#fbfbfb;"></div>
<div class="b" style="left:379px;top:805px;width:1px;height:35px;background:#d6d6d6;"></div>
<div class="b" style="left:380px;top:805px;width:1px;height:35px;background:#fbfbfb;"></div>
<div class="b" style="left:579px;top:805px;width:1px;height:35px;background:#d6d6d6;"></div>
<div class="b" style="left:580px;top:805px;width:1px;height:35px;background:#fbfbfb;"></div>
<div class="b" style="left:725px;top:805px;width:1px;height:35px;background:#d6d6d6;"></div>
<div class="b" style="left:726px;top:805px;width:1px;height:35px;background:#fbfbfb;"></div>
<div class="b" style="left:871px;top:805px;width:1px;height:35px;background:#d6d6d6;"></div>
<div class="b" style="left:872px;top:805px;width:1px;height:35px;background:#fbfbfb;"></div>
<div class="b" style="left:1042px;top:805px;width:1px;height:35px;background:#d6d6d6;"></div>
<div class="b" style="left:1043px;top:805px;width:1px;height:35px;background:#fbfbfb;"></div>
<div class="b" style="left:1213px;top:805px;width:1px;height:35px;background:#d6d6d6;"></div>
<div class="b" style="left:1214px;top:805px;width:1px;height:35px;background:#fbfbfb;"></div>
<div class="b" style="left:1384px;top:805px;width:1px;height:35px;background:#d6d6d6;"></div>
<div class="b" style="left:1385px;top:805px;width:1px;height:35px;background:#fbfbfb;"></div>
<div class="b" style="left:1568px;top:805px;width:1px;height:35px;background:#d6d6d6;"></div>
<div class="b" style="left:1569px;top:805px;width:1px;height:35px;background:#fbfbfb;"></div>
<div class="b" style="left:1769px;top:805px;width:1px;height:35px;background:#d6d6d6;"></div>
<div class="b" style="left:1770px;top:805px;width:1px;height:35px;background:#fbfbfb;"></div>
<div class="t" style="right:1068.4px;top:812.57px;font-size:16.6px;line-height:20.75px;color:#333;font-weight:normal;">39 372,33</div>
<div class="t" style="right:897.3px;top:812.57px;font-size:16.6px;line-height:20.75px;color:#333;font-weight:normal;">5 119</div>
<div class="t" style="right:726.0999999999999px;top:812.57px;font-size:16.6px;line-height:20.75px;color:#333;font-weight:normal;">31 969,58</div>
<div class="b" style="left:106px;top:866.5px;width:19px;height:19px;border:1px solid #c9c9c9;border-radius:2px;background:#fff;"></div>
<svg class="b" style="left:106px;top:864px" width="22" height="22" viewBox="0 0 22 22"><path d="M4.3 10.8 L8.2 15.3 L17.5 2.9" fill="none" stroke="#bdbdbd" stroke-width="2.8" stroke-linejoin="round" stroke-linecap="round"/></svg>
<div class="t" style="left:132.8px;top:866.57px;font-size:16.6px;line-height:20.75px;color:#9a9a9a;font-weight:normal;">Расчет утвердил</div>
<div class="fld" style="left:276.5px;top:862.5px;width:315.5px;height:28.0px;"></div>
<div class="b" style="left:539px;top:863.5px;width:1px;height:26.0px;background:#d6d6d6;"></div>
<div class="b" style="left:565px;top:863.5px;width:1px;height:26.0px;background:#d6d6d6;"></div>
<svg class="b" style="left:547px;top:872px" width="10" height="8" viewBox="0 0 10 8"><path d="M2 2.3 L8 2.3 L5 6 Z" fill="#9a9a9a"/></svg>
<svg class="b" style="left:572px;top:870px" width="13" height="13" viewBox="0 0 13 13"><g fill="none" stroke="#9a9a9a" stroke-width="1.3"><rect x="4.7" y="0.65" width="6.4" height="6.6"/><path d="M2.8 4.8 L0.7 4.8 L0.7 11.2 L7.1 11.2 L7.1 9.2"/></g></svg>
<div class="clip" style="left:278px;top:864px;width:258px;height:25px;"><div class="t" style="left:2px;top:-0.5px;font-size:16.6px;line-height:25px;color:#767676;">Орлова Е.Н. (Нач. отд. расчетов</div></div>
<div class="t" style="left:105px;top:906.67px;font-size:16.6px;line-height:20.75px;color:#333;font-weight:normal;">Руководитель:</div>
<div class="fld" style="left:224px;top:902.5px;width:513px;height:28.0px;"></div>
<div class="b" style="left:684px;top:903.5px;width:1px;height:26.0px;background:#d6d6d6;"></div>
<div class="b" style="left:710px;top:903.5px;width:1px;height:26.0px;background:#d6d6d6;"></div>
<svg class="b" style="left:693px;top:912px" width="10" height="8" viewBox="0 0 10 8"><path d="M2 2.3 L8 2.3 L5 6 Z" fill="#9a9a9a"/></svg>
<svg class="b" style="left:717px;top:910px" width="13" height="13" viewBox="0 0 13 13"><g fill="none" stroke="#404040" stroke-width="1.3"><rect x="4.7" y="0.65" width="6.4" height="6.6"/><path d="M2.8 4.8 L0.7 4.8 L0.7 11.2 L7.1 11.2 L7.1 9.2"/></g></svg>
<div class="t" style="left:106.4px;top:967.77px;font-size:16.6px;line-height:20.75px;color:#2f5db8;font-weight:normal;text-decoration:underline;text-underline-offset:2px;">Исправить</div>
<svg class="b" style="left:203px;top:966px" width="24" height="22" viewBox="203 966 24 22"><path d="M215 969.3 L224.2 984.6 L205.8 984.6 Z" fill="#f3d83c" stroke="#c9ac1e" stroke-width="1" stroke-linejoin="round"/><rect x="214" y="973.5" width="2" height="6.3" fill="#222"/><rect x="214" y="981" width="2" height="2" fill="#222"/></svg>
<div class="t" style="left:234.3px;top:967.27px;font-size:16.6px;line-height:20.75px;color:#8a7b52;font-weight:normal;">Выплата зарплаты за Февраль 2013 г уже проведена. Редактирование этого документа не рекомендуется.</div>
<div class="t" style="left:234.3px;top:986.47px;font-size:16.6px;line-height:20.75px;color:#8a7b52;font-weight:normal;">Воспользуйтесь командой Исправить для исправления этого документа</div>
<div class="t" style="left:106.4px;top:1016.87px;font-size:16.6px;line-height:20.75px;color:#1b9a4a;font-weight:normal;text-decoration:underline;text-underline-offset:2px;">Первичный документ</div>
<div class="clip" style="left:90px;top:1040px;width:1900px;height:21px;">
<div class="t" style="left:15px;top:12px;font-size:16.6px;line-height:21px;color:#333;">Комментарий:</div>
<div class="fld" style="left:134px;top:8.5px;width:513px;height:29px;"></div>
<div class="t" style="left:660px;top:12px;font-size:16.6px;line-height:21px;color:#333;">Ответственный:</div>
<div class="fld" style="left:790px;top:8.5px;width:253px;height:29px;"></div>
<div class="b" style="left:991.5px;top:9px;width:1px;height:28px;background:#d6d6d6;"></div>
<div class="b" style="left:1017.3px;top:9px;width:1px;height:28px;background:#d6d6d6;"></div>
<div class="t" style="left:794px;top:12px;font-size:16.6px;line-height:21px;color:#333;width:195px;overflow:hidden;">Орлова Е.Н. (Нач. отд. расчетов</div>
<svg class="b" style="left:999px;top:16px" width="10" height="8" viewBox="0 0 10 8"><path d="M2 2.3 L8 2.3 L5 6 Z" fill="#9a9a9a"/></svg>
<svg class="b" style="left:1027px;top:16.5px" width="13" height="13" viewBox="0 0 13 13"><g fill="none" stroke="#404040" stroke-width="1.3"><rect x="4.7" y="0.65" width="6.4" height="6.6"/><path d="M2.8 4.8 L0.7 4.8 L0.7 11.2 L7.1 11.2 L7.1 9.2"/></g></svg>
</div>
<div class="t" style="left:90px;top:1119.15px;font-size:47.5px;line-height:59.38px;color:#fff;font-weight:bold;letter-spacing:2.85px;">Рассчитывайте премии</div>
<svg class="b" style="left:1650px;top:1105px" width="370" height="90" viewBox="1650 1105 370 90">
<path d="M1667 1153 L1769.3 1153 C1770.8 1160 1770.3 1167 1765.5 1173 C1761.5 1178 1756 1180 1750 1180 L1684 1180 C1676 1180 1670 1176 1667.5 1169 C1665.5 1164 1665.5 1158 1667 1153 Z" fill="#fff"/>
<path d="M1668.5 1153 C1671.5 1146 1678 1141 1685.5 1141 C1689 1134.5 1694 1131.5 1700 1131.5 L1704 1131.5 C1709 1124 1715 1119.8 1722 1119.7 C1735 1120 1745 1129 1746.6 1141 C1755 1141 1763.5 1145.5 1767.5 1153 Z" fill="#fff"/>
<g fill="none" stroke="#3777d4" stroke-width="1.8">
<path d="M1723 1118 L1723 1133 C1720.5 1134 1718.5 1132 1716.8 1132 A5.6 5.6 0 1 0 1716.8 1143.2 C1718.5 1143.2 1720.5 1141.2 1723 1142.2 L1723 1161 C1720.5 1162 1718.5 1160.2 1717 1160.2 A5.6 5.6 0 1 0 1717 1171.4 C1718.5 1171.4 1720.5 1169.4 1723 1170.4 L1723 1182"/>
<path d="M1664 1152 L1691.8 1152 C1692.8 1154.5 1691 1156 1691.2 1158 A5.6 5.6 0 1 0 1702.4 1158 C1702.6 1156 1700.8 1154.5 1701.8 1152 L1738.6 1152 C1739.6 1154.5 1737.8 1156 1738 1158 A5.6 5.6 0 1 0 1749.2 1158 C1749.4 1156 1747.6 1154.5 1748.6 1152 L1772 1152"/>
</g>
<g fill="none" stroke="#fff" stroke-width="5.6" stroke-linecap="round">
<path d="M1784.5 1125.6 L1792.4 1125.6 L1792.4 1149.3"/>
<path d="M1817 1127.5 A11.6 11.6 0 1 0 1817 1147.6"/>
<path d="M1817.2 1138 L1821.3 1138"/>
<circle cx="1842.4" cy="1138" r="11.6"/>
<path d="M1831.5 1138 L1831.5 1158.3"/>
<circle cx="1872.4" cy="1138" r="11.6"/>
<path d="M1883.5 1140 L1883.5 1149.5"/>
<circle cx="1901.4" cy="1138" r="11.6"/>
<path d="M1890 1138 L1890 1157.6"/>
<path d="M1919 1126.5 L1919 1138 A11.5 11.5 0 0 0 1942 1138 L1942 1126.5"/>
<path d="M1942 1138 L1942 1149 C1942 1154 1938 1156.5 1933.5 1156.8"/>
<path d="M1965.2 1127.5 A11.6 11.6 0 1 0 1965.2 1148.3"/>
</g>
<path d="M1964.3 1139.3 C1970 1130.5 1980 1126 1993 1123.2 L1988.5 1132.8 C1996 1131.5 2002 1129 2007.5 1125.7 C2001 1134 1992 1139 1980 1140.7 L1983.5 1131.7 C1975 1132.5 1969 1135 1964.3 1139.3 Z" fill="#fff"/>
<circle cx="1984.3" cy="1117.5" r="4.8" fill="none" stroke="#fff" stroke-width="1.1"/>
<text x="1984.3" y="1120.6" font-family="Liberation Sans" font-size="7.5" font-weight="bold" fill="#fff" text-anchor="middle">R</text>
</svg>
<div class="t" style="left:1787px;top:1162.47px;font-size:16.6px;line-height:20.75px;color:#fff;font-weight:bold;letter-spacing:1.1px;">Облачные сервисы</div>
</body></html>
